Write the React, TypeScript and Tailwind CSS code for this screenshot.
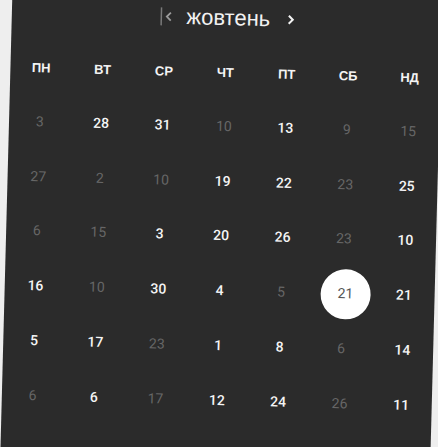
const days = ["ПН", "ВТ", "СР", "ЧТ", "ПТ", "СБ", "НД"];

// [value, state] — 0 dim, 1 bright, 2 selected
const weeks: [number, number][][] = [
  [[3, 0], [28, 1], [31, 1], [10, 0], [13, 1], [9, 0], [15, 0]],
  [[27, 0], [2, 0], [10, 0], [19, 1], [22, 1], [23, 0], [25, 1]],
  [[6, 0], [15, 0], [3, 1], [20, 1], [26, 1], [23, 0], [10, 1]],
  [[16, 1], [10, 0], [30, 1], [4, 1], [5, 0], [21, 2], [21, 1]],
  [[5, 1], [17, 1], [23, 0], [1, 1], [8, 1], [6, 0], [14, 1]],
  [[6, 0], [6, 1], [17, 0], [12, 1], [24, 1], [26, 0], [11, 1]],
];

export default function App() {
  return (
    <div className="h-screen w-full overflow-hidden bg-[#eeeeee] font-['Liberation_Sans',Arial,sans-serif]">
      <div className="-mt-5 ml-[6px] h-[500px] w-[430px] origin-[214px_260px] rotate-[1.5deg] bg-[#2b2b2b]">
        {/* Month header */}
        <div className="flex h-[76px] items-center justify-center pl-[2px]">
          <svg width="16" height="20" viewBox="0 0 16 20" className="mr-[11px]">
            <line x1="1.5" y1="1" x2="1.5" y2="19" stroke="#7a7a7a" strokeWidth="1.5" />
            <polyline points="11,6 7,10 11,14" fill="none" stroke="#9a9a9a" strokeWidth="1.8" />
          </svg>
          <span className="text-[22px] leading-none text-[#f2f2f2]">жовтень</span>
          <svg width="10" height="20" viewBox="0 0 10 20" className="ml-[16px]">
            <polyline points="3,6 7,10 3,14" fill="none" stroke="#f2f2f2" strokeWidth="2" />
          </svg>
        </div>

        {/* Weekday names */}
        <div className="grid h-[34px] grid-cols-7 items-center">
          {days.map((d) => (
            <div key={d} className="text-center text-[13px] font-bold text-[#f4f4f4]">
              {d}
            </div>
          ))}
        </div>

        {/* Day grid */}
        <div className="mt-[9px] grid grid-cols-7 font-['Roboto',sans-serif]">
          {weeks.flat().map(([n, s], i) => (
            <div key={i} className="flex h-[54.8px] items-center justify-center">
              {s === 2 ? (
                <div className="ml-[6px] flex h-[50px] w-[50px] items-center justify-center rounded-full bg-white text-[14px] text-[#555555]">
                  {n}
                </div>
              ) : (
                <span
                  className={
                    s === 1
                      ? "text-[14px] font-medium text-[#f5f5f5]"
                      : "text-[14px] text-[#666666]"
                  }
                >
                  {n}
                </span>
              )}
            </div>
          ))}
        </div>
      </div>
    </div>
  );
}
